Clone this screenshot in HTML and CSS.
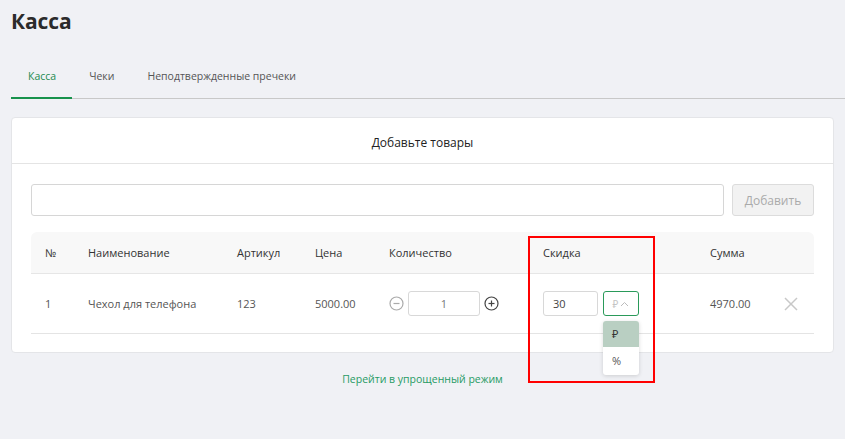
FILE: index.html
```html
<!DOCTYPE html>
<html lang="ru">
<head>
<meta charset="utf-8">
<link rel="stylesheet" href="styles.css">
</head>
<body>
<div class="page">
  <h1 class="title">Касса</h1>
  <nav class="tabs">
    <span class="tab active">Касса</span>
    <span class="tab">Чеки</span>
    <span class="tab">Неподтвержденные пречеки</span>
  </nav>
  <section class="card">
    <div class="card-head">Добавьте товары</div>
    <div class="card-body">
      <div class="add-row">
        <input class="search" type="text">
        <button class="add-btn">Добавить</button>
      </div>
      <div class="table">
        <div class="row head">
          <div class="c-num">№</div>
          <div class="c-name">Наименование</div>
          <div class="c-art">Артикул</div>
          <div class="c-price">Цена</div>
          <div class="c-qty">Количество</div>
          <div class="c-disc">Скидка</div>
          <div class="c-sum">Сумма</div>
          <div class="c-del"></div>
        </div>
        <div class="row body">
          <div class="c-num">1</div>
          <div class="c-name">Чехол для телефона</div>
          <div class="c-art">123</div>
          <div class="c-price">5000.00</div>
          <div class="c-qty">
            <svg class="circ" width="15" height="15" viewBox="0 0 15 15"><circle cx="7.5" cy="7.5" r="6.5" fill="none" stroke="#aaa" stroke-width="1.2"/><line x1="4.5" y1="7.5" x2="10.5" y2="7.5" stroke="#aaa" stroke-width="1.2"/></svg>
            <div class="qty-box">1</div>
            <svg class="circ" width="15" height="15" viewBox="0 0 15 15"><circle cx="7.5" cy="7.5" r="6.5" fill="none" stroke="#444" stroke-width="1.2"/><line x1="4.5" y1="7.5" x2="10.5" y2="7.5" stroke="#444" stroke-width="1.2"/><line x1="7.5" y1="4.5" x2="7.5" y2="10.5" stroke="#444" stroke-width="1.2"/></svg>
          </div>
          <div class="c-disc">
            <div class="disc-box">30</div>
            <div class="select-wrap">
              <div class="select">₽
                <svg width="9" height="6" viewBox="0 0 9 6"><polyline points="1,5 4.5,1.5 8,5" fill="none" stroke="#bbb" stroke-width="1"/></svg>
              </div>
              <div class="menu">
                <div class="opt sel">₽</div>
                <div class="opt">%</div>
              </div>
            </div>
          </div>
          <div class="c-sum">4970.00</div>
          <div class="c-del">
            <svg width="14" height="14" viewBox="0 0 14 14"><line x1="1" y1="1" x2="13" y2="13" stroke="#c8c8c8" stroke-width="1.5"/><line x1="13" y1="1" x2="1" y2="13" stroke="#c8c8c8" stroke-width="1.5"/></svg>
          </div>
        </div>
      </div>
    </div>
  </section>
  <div class="link-row"><a class="link">Перейти в упрощенный режим</a></div>
  <div class="highlight"></div>
</div>
</body>
</html>
```
FILE: styles.css
```css
* { box-sizing: border-box; }
html, body { margin: 0; padding: 0; }
body {
  background: #f0f1f5;
  font-family: "Open Sans", "Noto Sans", sans-serif;
  color: #333;
  width: 845px;
  height: 439px;
  overflow: hidden;
}
.page { position: relative; padding: 0 11px; }
.title {
  margin: 0;
  padding-top: 6px;
  font-size: 21px;
  font-weight: 700;
  line-height: 30px;
  color: #2b2b2b;
  letter-spacing: -0.1px;
}
.tabs {
  display: flex;
  margin-top: 32px;
  border-bottom: 1px solid #c8c8c8;
  margin-right: -11px;
}
.tab {
  font-size: 10.5px;
  line-height: 16px;
  padding: 0 16px 13px 17px;
  color: #555;
}
.tab + .tab { padding-left: 17px; }
.tab.active {
  color: #1d8a4e;
  border-bottom: 2px solid #17924c;
  margin-bottom: -1px;
}
.card {
  margin-top: 18px;
  background: #fff;
  border: 1px solid #e4e5e8;
  border-radius: 4px;
  height: 236px;
}
.card-head {
  height: 46px;
  border-bottom: 1px solid #e4e4e4;
  text-align: center;
  font-size: 12px;
  line-height: 50px;
  color: #222;
}
.card-body { padding: 20px 19px 0 19px; }
.add-row { display: flex; gap: 8px; }
.search {
  flex: 1;
  height: 32px;
  border: 1px solid #d6d6d6;
  border-radius: 3px;
  background: #fff;
  margin: 0;
}
.add-btn {
  width: 82px;
  height: 32px;
  border: 1px solid #dcdcdc;
  border-radius: 3px;
  background: #f2f2f2;
  color: #aaa;
  font-family: inherit;
  font-size: 12px;
  margin: 0;
  padding: 0;
}
.table { margin-top: 16px; }
.row {
  display: grid;
  grid-template-columns: 57px 149px 78px 74px 154px 167px 70px 1fr;
  align-items: center;
  font-size: 11px;
}
.row > div:first-child { padding-left: 14px; }
.row.head {
  height: 42px;
  background: #f8f8f8;
  border-radius: 6px 6px 0 0;
  border-bottom: 1px solid #e6e6e6;
  color: #333;
}
.row.body {
  height: 60px;
  border-bottom: 1px solid #e4e4e4;
  color: #555;
}
.c-qty { display: flex; align-items: center; gap: 4px; }
.circ { display: block; }
.qty-box {
  width: 72px;
  height: 25px;
  border: 1px solid #d8d8d8;
  border-radius: 3px;
  text-align: center;
  line-height: 23px;
  color: #777;
}
.c-disc { display: flex; align-items: center; gap: 5px; }
.disc-box {
  width: 55px;
  height: 25px;
  border: 1px solid #d8d8d8;
  border-radius: 3px;
  line-height: 23px;
  padding-left: 9px;
  color: #444;
}
.select-wrap { position: relative; }
.select {
  width: 36px;
  height: 25px;
  border: 1px solid #2a9a5a;
  border-radius: 3px;
  display: flex;
  align-items: center;
  justify-content: center;
  gap: 2px;
  color: #c4c4c4;
  font-size: 10px;
}
.menu {
  position: absolute;
  top: 30px;
  left: 0;
  width: 36px;
  background: #fff;
  border-radius: 3px;
  box-shadow: 0 1px 4px rgba(0,0,0,0.15);
  overflow: hidden;
  z-index: 2;
}
.opt {
  height: 28px;
  line-height: 28px;
  padding-left: 9px;
  font-size: 11px;
  color: #555;
}
.opt.sel { background: #b9cfc2; color: #333; height: 26px; line-height: 26px; }
.c-del svg { display: block; margin-left: 4px; }
.link-row { text-align: center; margin-top: 13px; }
.link { font-size: 10.5px; color: #279b64; }
.highlight {
  position: absolute;
  left: 528px;
  top: 236px;
  width: 127px;
  height: 147px;
  border: 2px solid #f00;
  pointer-events: none;
}
```
